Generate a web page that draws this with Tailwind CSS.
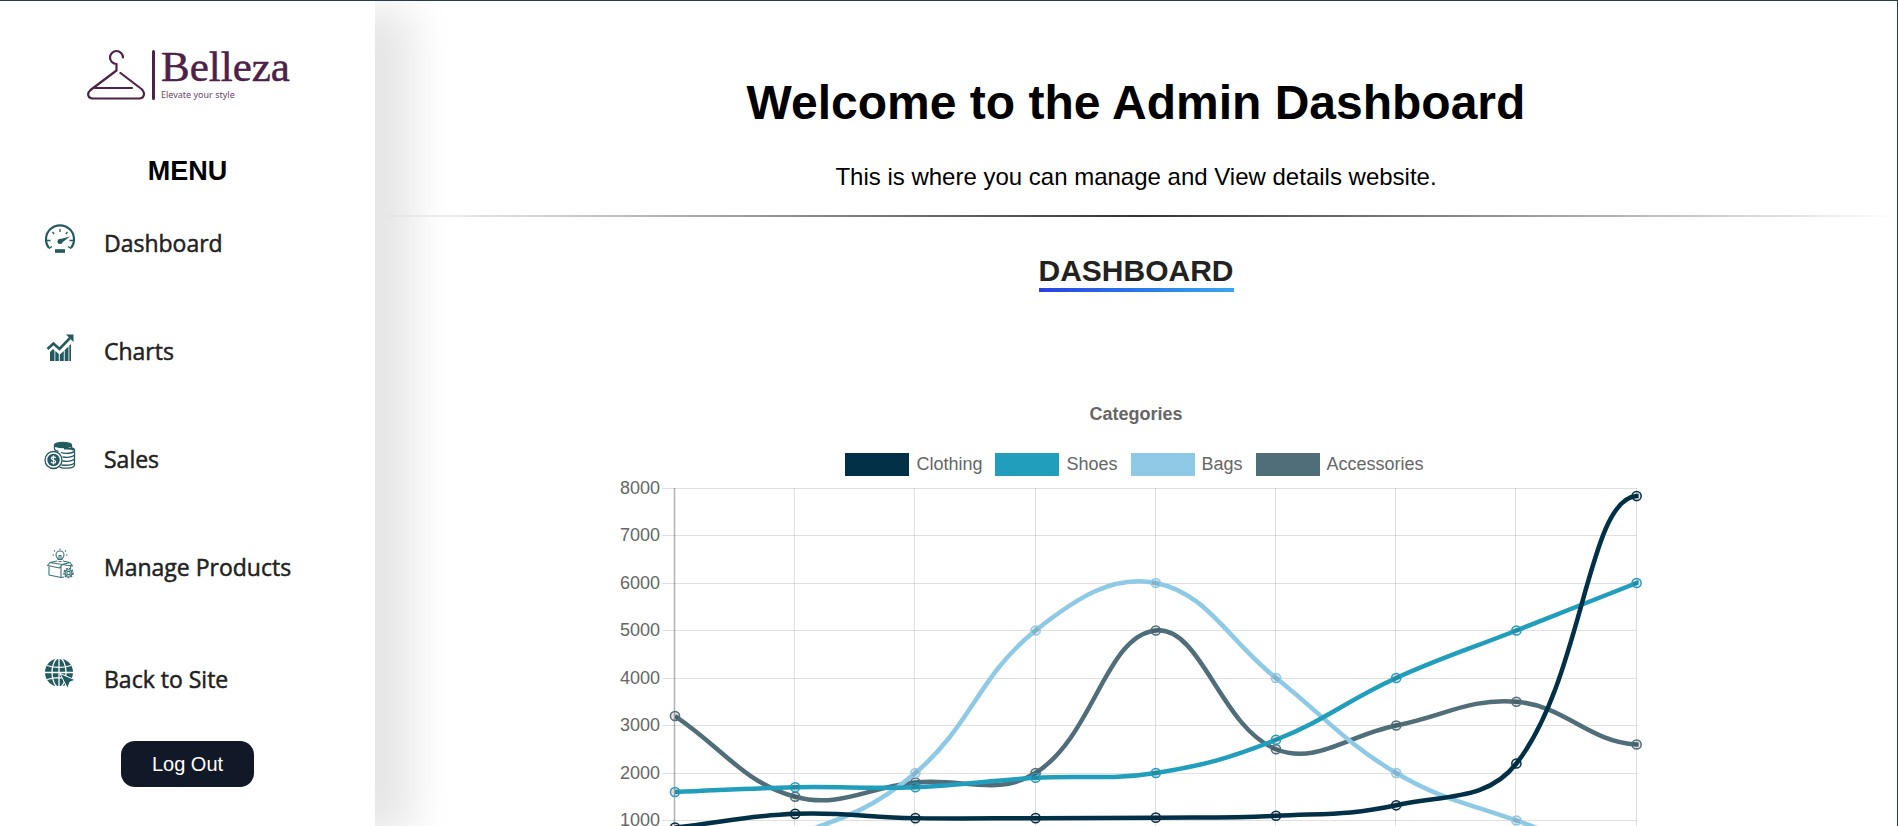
<!DOCTYPE html>
<html lang="en">
<head>
<meta charset="utf-8">
<title>Belleza Admin Dashboard</title>
<script src="https://cdn.jsdelivr.net/npm/@tailwindcss/browser@4"></script>
</head>
<body class="bg-white font-['Liberation_Sans',sans-serif] text-black">
<div class="flex h-screen overflow-hidden border-t border-r border-[#24404f]">
  <aside class="flex w-[375px] shrink-0 flex-col bg-white shadow-[38px_8px_40px_rgba(0,0,0,0.1)]">
    <a href="#" aria-label="Belleza home" class="mt-12 ml-[87px] flex h-[52px] items-center text-[#4d2148]">
      <svg class="h-[52px] w-[58px]" viewBox="0 0 58 52" fill="none" stroke="currentColor" stroke-width="2.2" stroke-linecap="round" stroke-linejoin="round">
        <path d="M36 8.500A6.500 6.500 0 1 0 29.500 15v6.500L3.500 41c-4 3.500-2.500 8.500 2 8.500h46.500c5.500 0 6.500-6 2.500-9.500L33.500 24"/><path d="M8 39h37"/>
      </svg>
      <span class="ml-[7px] h-[50px] w-[3px] rounded-full bg-current"></span>
      <span class="ml-[6px] flex flex-col">
        <span class="font-['Liberation_Serif',serif] text-[43px] leading-9 [-webkit-text-stroke:0.5px]">Belleza</span>
        <span class="mt-1 font-['Noto_Sans',sans-serif] text-[9px] leading-3 text-[#6b4468]">Elevate your style</span>
      </span>
    </a>
    <h2 class="mt-[54px] text-center text-[27px] leading-8 font-bold">MENU</h2>
    <nav class="mt-[38px] flex flex-col gap-[72px] pl-11 font-['Open_Sans','Noto_Sans',sans-serif] text-[23px] leading-9 font-medium text-[#222] [-webkit-text-stroke:0.5px]">
      <a href="#" class="flex h-9 items-center gap-7">
        <svg class="mb-1.5 h-8 w-8 text-[#235a60]" viewBox="0 0 32 32" fill="none" stroke="currentColor">
          <path d="M5 24A14 14 0 1 1 27 24" stroke-width="2.200"/><path d="M16 5v3M8.500 8l1.700 2M23.500 8l-1.700 2M3 16.500h3.500M25.500 16.500H29M5 24.500l3-2M27 24.500l-3-2" stroke-width="1.300"/>
          <path d="M14.500 15.500L26 12.500L17.600 19Z" fill="currentColor" stroke="none"/><circle cx="16" cy="17.500" r="2.500" fill="currentColor" stroke="none"/><path d="M11 27h10" stroke-width="3.600"/>
        </svg>Dashboard</a>
      <a href="#" class="flex h-9 items-center gap-7">
        <svg class="mb-1.5 h-8 w-8 text-[#235a60]" viewBox="0 0 32 32" fill="currentColor">
          <path d="M6 20l3-3 1.500 1.500V29H6zM11.300 19l3.500 3V29h-3.500zM15.800 22.500l4-3.500v10h-4zM20.700 18l3.800-3.500V29h-3.800zM25.300 13.500l1.700-1.500v17h-1.700z"/><path d="M3.500 17L9.500 11.500L15.500 17L26 6" fill="none" stroke="currentColor" stroke-width="2.600"/><path d="M22 2.500h7.500V10z"/>
        </svg>Charts</a>
      <a href="#" class="flex h-9 items-center gap-7">
        <svg class="mb-1.5 h-8 w-8 text-[#235a60]" viewBox="0 0 32 32" fill="none" stroke="currentColor" stroke-width="1.300">
          <ellipse cx="19" cy="5" rx="8.500" ry="2.500" fill="currentColor"/><path d="M10.500 5v4c0 1.500 2 2 4 2.400M27.500 5v3M27 8c2.500.3 3.500.8 3.500 2v15c0 4-15 4-15 1.500M30.500 11c-2 2.500-10 3-13.500 1.500M30.500 15c-2 2-8 2.500-12 2M30.500 19c-2 2-8 2.500-12 2M30.500 23c-2 2-8 2.500-13 2"/><path d="M20 8.500c4 0 7.500-.5 10 1.500" stroke-width="2.200"/>
          <circle cx="9.500" cy="20" r="8.500" fill="white"/><circle cx="9.500" cy="20" r="6.200" fill="currentColor" stroke="none"/><path d="M11.700 18c-.5-1.500-4.400-1.500-4.400.3 0 2 4.400 1.300 4.400 3.400 0 1.800-4 1.800-4.600.1M9.500 15.500v9" stroke="white" stroke-width="1.200"/>
        </svg>Sales</a>
      <a href="#" class="flex h-9 items-center gap-7">
        <svg class="mb-1.5 h-8 w-8 text-[#3b7378]" viewBox="0 0 32 32" fill="none" stroke="currentColor" stroke-width="1.100" stroke-linejoin="round">
          <path d="M14 11.500c0-1.500-2-2-2-4.500a4 4 0 0 1 8 0c0 2.500-2 3-2 4.500zM14.500 13.500h3M16 2V.5M11 3.500L10 2.500M21 3.500l1-1M10 7H8.500M22 7h1.500M14.500 7.500h3M15 8v3M17 8v3"/>
          <path d="M13 13l-7 1.500-2.500 3L15.500 20l2.500-3.500L28.500 18 26 14.500 19 13M6 14.500L18 16.500 26 14.500M5 18.500v8.500L17 29.500V18M17 29.500l3-.5M26.500 18v3"/>
          <circle cx="24.500" cy="25" r="4.500" stroke-width="1.500" stroke-dasharray="2 1"/><circle cx="24.500" cy="25" r="3.300"/><path d="M23 23.500h3v3h-3z"/>
        </svg>Manage Products</a>
      <a href="#" class="mt-1 flex h-9 items-center gap-7">
        <svg class="mb-3 h-8 w-8 text-[#235a60]" viewBox="0 0 32 32">
          <circle cx="15" cy="15.500" r="14" fill="currentColor"/><g fill="none" stroke="white" stroke-width="1.300"><path d="M15 1v29M1 15.500h28M3 8.500c7 2.200 17 2.200 24 0M3 22.500c7-2.200 17-2.200 24 0"/><ellipse cx="15" cy="15.500" rx="7" ry="14.500"/></g>
          <path d="M16 16.500L31.500 23l-5.500 2-2.500 6.500z" fill="currentColor" stroke="white" stroke-width="1"/>
        </svg>Back to Site</a>
    </nav>
    <button type="button" class="mt-11 ml-[121px] h-[46px] w-[133px] rounded-[14px] bg-[#111827] text-xl text-white">Log Out</button>
  </aside>

  <main class="min-w-0 flex-1 overflow-y-auto [scrollbar-width:none]">
    <header class="text-center">
      <h1 class="pt-[74px] text-5xl leading-14 font-bold">Welcome to the Admin Dashboard</h1>
      <p class="mt-8 text-2xl leading-7">This is where you can manage and View details website.</p>
      <div class="mt-6 h-[2px] bg-linear-to-r from-transparent via-[#333] to-transparent"></div>
    </header>
    <section class="mt-9 flex flex-col items-center">
      <h2 class="text-3xl leading-[35px] font-bold text-[#222]">DASHBOARD<span class="block h-1 bg-linear-to-r from-[#2a3fe0] to-[#3ba5ee]"></span></h2>
      <figure class="mt-[110px] flex w-full max-w-[1040px] flex-col text-lg leading-6 text-[#666]">
        <figcaption class="text-center font-bold">Categories</figcaption>
        <ul class="mt-[26px] flex justify-center gap-[13px] pr-[3px]">
          <li class="flex items-center gap-[7px]"><span class="h-[23px] w-16 bg-[#023047]"></span>Clothing</li>
          <li class="flex items-center gap-[7px]"><span class="h-[23px] w-16 bg-[#219ebc]"></span>Shoes</li>
          <li class="flex items-center gap-[7px]"><span class="h-[23px] w-16 bg-[#8ecae6]"></span>Bags</li>
          <li class="flex items-center gap-[7px]"><span class="h-[23px] w-16 bg-[#506d7a]"></span>Accessories</li>
        </ul>
        <svg id="chart" class="w-full" viewBox="0 0 1040 430" role="img" aria-label="Line chart of categories"></svg>
      </figure>
    </section>
  </main>
</div>
<script>
const NS = 'http://www.w3.org/2000/svg', svg = document.getElementById('chart');
const add = (tag, attrs, parent = svg) => {
  const el = document.createElementNS(NS, tag);
  for (const k in attrs) el.setAttribute(k, attrs[k]);
  return parent.appendChild(el);
};
const left = 59, step = 120.2, top0 = 12, bottom = 392, right = left + step * 8;
const X = i => left + step * i, Y = v => bottom - (v / 8000) * (bottom - top0);
const clip = add('clipPath', { id: 'plot' });
add('rect', { x: left, y: top0 - 2, width: right - left + 2, height: bottom - top0 + 4 }, clip);
for (let v = 0; v <= 8000; v += 1000) {
  const y = Math.floor(Y(v)) + 0.5;
  add('path', { d: `M${left - 13} ${y}H${right}`, stroke: '#000', 'stroke-opacity': 0.12, 'stroke-width': 1 });
  add('text', { x: left - 15, y: y + 5, 'text-anchor': 'end', 'font-size': 18, fill: '#666' }).textContent = v;
}
for (let i = 0; i < 9; i++) {
  add('path', { d: `M${Math.round(X(i)) - 0.5} ${top0}V${bottom + 13}`, stroke: '#000', 'stroke-opacity': i ? 0.12 : 0.3, 'stroke-width': i ? 1 : 1.5 });
}
const series = [
  ['#506d7a', [3200, 1500, 1800, 2000, 5000, 2500, 3000, 3500, 2600, 3200]],
  ['#8ecae6', [300, 700, 2000, 5000, 6000, 4000, 2000, 1000, 200, 100]],
  ['#219ebc', [1600, 1700, 1700, 1900, 2000, 2700, 4000, 5000, 6000, 7000]],
  ['#023047', [850, 1140, 1050, 1050, 1060, 1100, 1320, 2200, 7830, 2478]]
];
const tension = 0.4;
for (const [color, data] of series) {
  const p = data.map((v, i) => [X(i), Y(v)]);
  const cp = p.map((c, i) => {
    const a = p[Math.max(i - 1, 0)], b = p[Math.min(i + 1, p.length - 1)];
    const d1 = Math.hypot(c[0] - a[0], c[1] - a[1]), d2 = Math.hypot(b[0] - c[0], b[1] - c[1]);
    const f1 = tension * d1 / (d1 + d2), f2 = tension * d2 / (d1 + d2);
    const cap = y => Math.min(Math.max(y, top0), bottom);
    return [c[0] - f1 * (b[0] - a[0]), cap(c[1] - f1 * (b[1] - a[1])), c[0] + f2 * (b[0] - a[0]), cap(c[1] + f2 * (b[1] - a[1]))];
  });
  let d = `M${p[0]}`;
  for (let i = 1; i < p.length; i++) d += `C${cp[i - 1][2]} ${cp[i - 1][3]} ${cp[i][0]} ${cp[i][1]} ${p[i]}`;
  add('path', { d, fill: 'none', stroke: color, 'stroke-width': 4.5, 'clip-path': 'url(#plot)' });
  for (const [x, y] of p.slice(0, 9)) add('circle', { cx: x, cy: y, r: 4.6, fill: '#000', 'fill-opacity': 0.1, stroke: color, 'stroke-width': 1.5 });
}
</script>
</body>
</html>
